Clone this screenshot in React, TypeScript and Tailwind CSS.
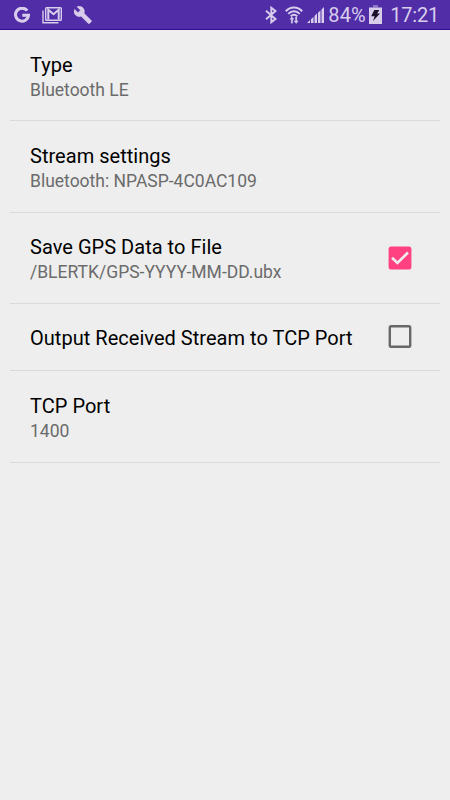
import clsx from "clsx";

type Preference = {
  title: string;
  summary?: string;
  checked?: boolean;
};

const preferences: Preference[] = [
  { title: "Type", summary: "Bluetooth LE" },
  { title: "Stream settings", summary: "Bluetooth: NPASP-4C0AC109" },
  {
    title: "Save GPS Data to File",
    summary: "/BLERTK/GPS-YYYY-MM-DD.ubx",
    checked: true,
  },
  { title: "Output Received Stream to TCP Port", checked: false },
  { title: "TCP Port", summary: "1400" },
];

function GoogleIcon() {
  return (
    <svg viewBox="0 0 16 16" className="size-4" fill="none">
      <path
        d="M13.200 3.700A6.500 6.500 0 1 0 14.500 8.300H8.300"
        stroke="currentColor"
        strokeWidth="3"
      />
    </svg>
  );
}

function GmailIcon() {
  return (
    <svg viewBox="0 0 20 17" className="h-[17px] w-5" fill="none">
      <path d="M1 3.500V15.800H16.500" stroke="currentColor" strokeWidth="1.400" />
      <rect
        x="3.700"
        y=".7"
        width="15.600"
        height="12.600"
        rx=".8"
        stroke="currentColor"
        strokeWidth="1.400"
      />
      <path
        d="M6.300 12.500V2.700l5.200 4.500 5.200-4.500v9.800"
        stroke="currentColor"
        strokeWidth="2"
      />
    </svg>
  );
}

function WrenchIcon() {
  return (
    <svg viewBox="1 1 22.5 22" className="size-[18px]" fill="currentColor">
      <path
        d="m22.700 19-9.100-9.100c.9-2.300.4-5-1.500-6.900-2-2-5-2.400-7.400-1.300L9 6 6 9 1.600 4.700C.4 7.100.9 10.100 2.900 12.100c1.900 1.900 4.600 2.400 6.900 1.500l9.100 9.100c.4.4 1 .4 1.400 0l2.300-2.300c.5-.4.5-1.100.1-1.400Z"
        stroke="currentColor"
        strokeWidth=".5"
      />
    </svg>
  );
}

function BluetoothIcon() {
  return (
    <svg viewBox="0 0 12 18" className="h-[18px] w-3" fill="none">
      <path
        d="M1 4.800 10.500 13 6.300 16.300V1.700L10.500 5 1 13.200"
        stroke="currentColor"
        strokeWidth="1.900"
      />
    </svg>
  );
}

function WifiIcon() {
  return (
    <svg viewBox="0 0 18 18" className="size-[18px]" fill="none">
      <g stroke="currentColor" strokeWidth="2">
        <path d="M.8 5.300C5.500.3 12.500.3 17.200 5.300" />
        <path d="M3.300 7.900c3.400-3.500 8-3.500 11.400 0" />
        <path d="M5.700 10.400c2-2 4.600-2 6.600 0" />
      </g>
      <path
        d="M6.900 10.700 9 13.200H7.700v4H6.200v-4H4.900Zm4.300 6.900L9 15h1.400v-4h1.500v4h1.400Z"
        fill="currentColor"
        stroke="currentColor"
        strokeWidth=".3"
      />
    </svg>
  );
}

function SignalIcon() {
  return (
    <svg viewBox="0 0 18 17" className="h-[17px] w-[18px]" fill="currentColor">
      <path d="M0 16 3 13v3ZM4 12.300 6.500 10v6H4ZM7.500 9 10 6.600V16H7.500ZM11 5.700l2.500-2.300V16H11ZM14.500 2.400 17 0v16h-2.500Z" />
    </svg>
  );
}

function BatteryIcon() {
  return (
    <svg viewBox="0 0 13 19" className="h-[19px] w-[13px]">
      <path d="M4 0h5v2.500H4Z" fill="#8f77c7" />
      <path d="M0 2.500h13V19H0Z" fill="currentColor" />
      <path d="M5.300 5h5L8.200 8.600H11L4 16l1.600-4.700H2.200Z" fill="#1b1029" />
    </svg>
  );
}

function StatusBar() {
  return (
    <header className="flex h-[30px] items-center border-b border-[#370c93] bg-[#512da8] text-[#d8ceec]">
      <div className="flex flex-1 items-center gap-3 pt-px pl-[14px]">
        <GoogleIcon />
        <GmailIcon />
        <WrenchIcon />
      </div>
      <div className="flex items-center pt-px pr-[11px] text-[20px] leading-none">
        <BluetoothIcon />
        <span className="ml-2">
          <WifiIcon />
        </span>
        <span className="ml-1">
          <SignalIcon />
        </span>
        <span className="ml-[3px] w-[38px] whitespace-nowrap tracking-[0.2px]">
          84%
        </span>
        <span className="ml-[3px] pb-px">
          <BatteryIcon />
        </span>
        <span className="ml-2 whitespace-nowrap tracking-[-0.200px]">
          17:21
        </span>
      </div>
    </header>
  );
}

function Checkbox({ checked }: { checked: boolean }) {
  return (
    <span
      role="checkbox"
      aria-checked={checked}
      className="mr-2 size-6 shrink-0"
    >
      <svg viewBox="0 0 24 24" className="size-full" fill="none">
        {checked ? (
          <>
            <rect x=".6" y=".6" width="22.800" height="22.800" rx="2.500" fill="#ff4081" />
            <path d="m4 11.800 5.400 5.200L20 6.500" stroke="#eee" strokeWidth="2.600" />
          </>
        ) : (
          <rect
            x="1.800"
            y="1.300"
            width="20.400"
            height="20.400"
            rx="1.300"
            stroke="#676767"
            strokeWidth="2.400"
          />
        )}
      </svg>
    </span>
  );
}

function PreferenceRow({ title, summary, checked }: Preference) {
  return (
    <li
      className={clsx(
        "flex items-center justify-between border-b border-[#dadada] pl-5",
        summary ? "h-[91.250px]" : "h-[67.500px]",
      )}
    >
      <div className={clsx("whitespace-nowrap", summary ? "pt-[3px]" : "pt-px")}>
        <p className="text-[20px] leading-[26px] tracking-[0.030px] text-black">
          {title}
        </p>
        {summary && (
          <p className="text-[17.500px] leading-6 text-[#6b6b6b]">{summary}</p>
        )}
      </div>
      {checked !== undefined && (
        <span className="flex pr-5">
          <Checkbox checked={checked} />
        </span>
      )}
    </li>
  );
}

export default function App() {
  return (
    <div className="h-screen overflow-hidden bg-[#eee] font-[Roboto,sans-serif]">
      <StatusBar />
      <ul className="px-2.5">
        {preferences.map((preference) => (
          <PreferenceRow key={preference.title} {...preference} />
        ))}
      </ul>
    </div>
  );
}
